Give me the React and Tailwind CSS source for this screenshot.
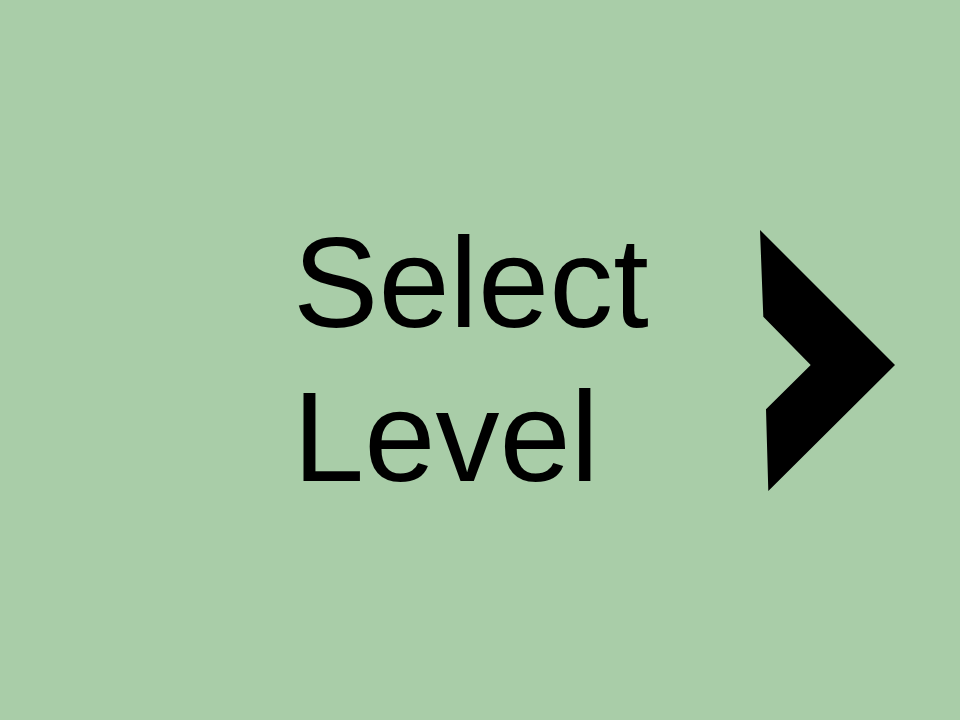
export default function App() {
  return (
    <div className="w-[960px] h-[720px] bg-[#a9cda8] flex items-center pl-[293px] overflow-hidden">
      <div
        className="w-[467px] shrink-0 text-[128px] leading-[1.2] text-black"
        style={{ fontFamily: '"Liberation Sans", Arial, sans-serif' }}
      >
        Select
        <br />
        Level
      </div>
      <svg
        width="136"
        height="262"
        viewBox="0 0 136 262"
        className="shrink-0 mt-[2px]"
        aria-hidden="true"
      >
        <polygon
          points="0,0 135,135 8.3,261 6,179.3 50.7,135 3.3,86.7"
          fill="#000"
        />
      </svg>
    </div>
  )
}
